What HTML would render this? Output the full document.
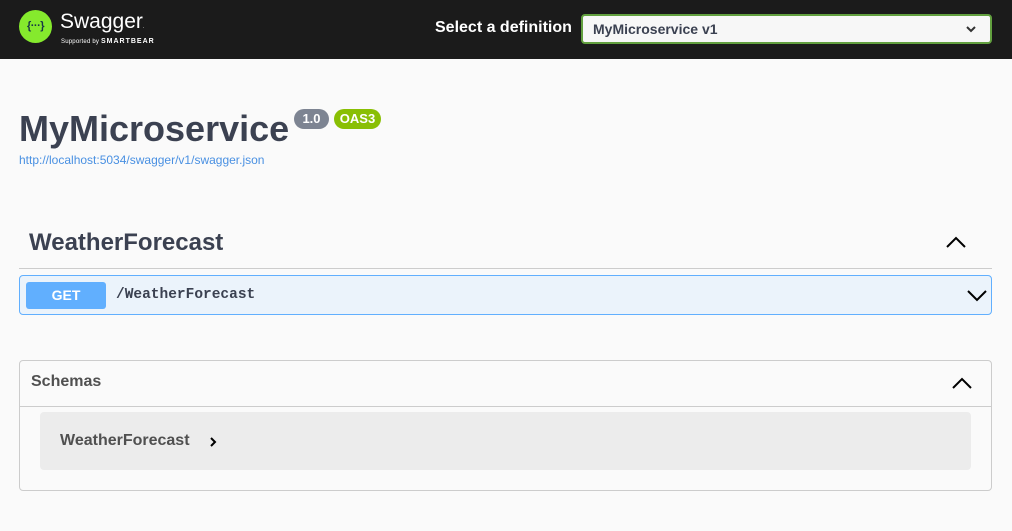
<!DOCTYPE html>
<html><head><meta charset="utf-8"><style>
*{box-sizing:border-box;margin:0;padding:0}
body{width:1012px;height:531px;background:#fafafa;font-family:"Liberation Sans",sans-serif;color:#3b4151;overflow:hidden;position:relative}
.top{position:absolute;left:0;top:0;width:1012px;height:59px;background:#1b1b1b}
.logo{position:absolute;left:19px;top:10px;width:33px;height:33px;border-radius:50%;background:#85ea2d;color:#173647;font:bold 11px "Liberation Sans",sans-serif;text-align:center;line-height:33px;letter-spacing:-0.5px}
.sw{position:absolute;left:60px;top:10px;color:#fff;font-size:21px}
.sup{position:absolute;left:61px;top:38px;color:#fff;font-size:6px;letter-spacing:.2px}
.sup b{font-size:7px;letter-spacing:1px}
.sel{position:absolute;left:435px;top:19px;color:#fff;font-weight:bold;font-size:16px}
.dd{position:absolute;left:581px;top:14px;width:411px;height:30px;border:2px solid #62a03f;border-radius:4px;background:#f7f7f7;font-weight:bold;font-size:14px;padding:5px 10px;color:#3b4151}
h1{position:absolute;left:19px;top:108px;font-size:36px;font-weight:bold;color:#3b4151}
.b{position:absolute;top:109px;height:20px;border-radius:10px;color:#fff;font-weight:bold;font-size:13px;line-height:20px;text-align:center}
.url{position:absolute;left:19px;top:153px;font-size:12px;color:#4990e2}
.tag{position:absolute;left:29px;top:229px;font-size:24px;font-weight:bold}
.line{position:absolute;left:19px;top:268px;width:973px;height:1px;background:#ccc}
.op{position:absolute;left:19px;top:275px;width:973px;height:40px;border:1px solid #61affe;border-radius:4px;background:#ebf3fb}
.get{position:absolute;left:6px;top:6px;width:80px;height:27px;background:#61affe;border-radius:3px;color:#fff;font-weight:bold;font-size:14px;text-align:center;line-height:27px}
.path{position:absolute;left:96px;top:11px;font:bold 14.5px "Liberation Mono",monospace;color:#3b4151}
.sch{position:absolute;left:19px;top:360px;width:973px;height:131px;border:1px solid #ccc;border-radius:4px}
.sch .t{position:absolute;left:11px;top:12px;font-size:16px;font-weight:bold;color:#505050}
.sch .l{position:absolute;left:0;top:45px;width:971px;height:1px;background:#ccc}
.model{position:absolute;left:20px;top:51px;width:931px;height:58px;background:#ececec;border-radius:4px}
.model span{position:absolute;left:20px;top:20px;font-size:16px;font-weight:bold;color:#505050}
svg{position:absolute}
</style></head><body>
<div class="top">
<div class="logo">{···}</div>
<div class="sw">Swagger<span style="font-size:5px">.</span></div>
<div class="sup">Supported by <b>SMARTBEAR</b></div>
<div class="sel">Select a definition</div>
<div class="dd">MyMicroservice v1
<svg style="right:14px;top:10px" width="10" height="7" viewBox="0 0 10 7"><path d="M1 1l4 4 4-4" stroke="#333" stroke-width="2" fill="none"/></svg></div>
</div>
<h1>MyMicroservice</h1>
<div class="b" style="left:294px;width:35px;background:#7d8492">1.0</div>
<div class="b" style="left:334px;width:47px;background:#89bf04">OAS3</div>
<div class="url">http://localhost:5034/swagger/v1/swagger.json</div>
<div class="tag">WeatherForecast</div>
<svg style="left:946px;top:236px" width="20" height="12" viewBox="0 0 20 12"><path d="M1 11L10 2l9 9" stroke="#000" stroke-width="2" fill="none"/></svg>
<div class="line"></div>
<div class="op"><div class="get">GET</div><div class="path">/WeatherForecast</div>
<svg style="left:947px;top:14px" width="20" height="12" viewBox="0 0 20 12"><path d="M1 1l9 9 9-9" stroke="#000" stroke-width="2" fill="none"/></svg></div>
<div class="sch"><div class="t">Schemas</div>
<svg style="left:932px;top:16px" width="20" height="12" viewBox="0 0 20 12"><path d="M1 11L10 2l9 9" stroke="#000" stroke-width="2" fill="none"/></svg>
<div class="l"></div>
<div class="model"><span>WeatherForecast</span>
<svg style="left:170px;top:25px" width="7" height="10" viewBox="0 0 7 10"><path d="M1 1l4 4-4 4" stroke="#000" stroke-width="2" fill="none"/></svg></div>
</div>
</body></html>
